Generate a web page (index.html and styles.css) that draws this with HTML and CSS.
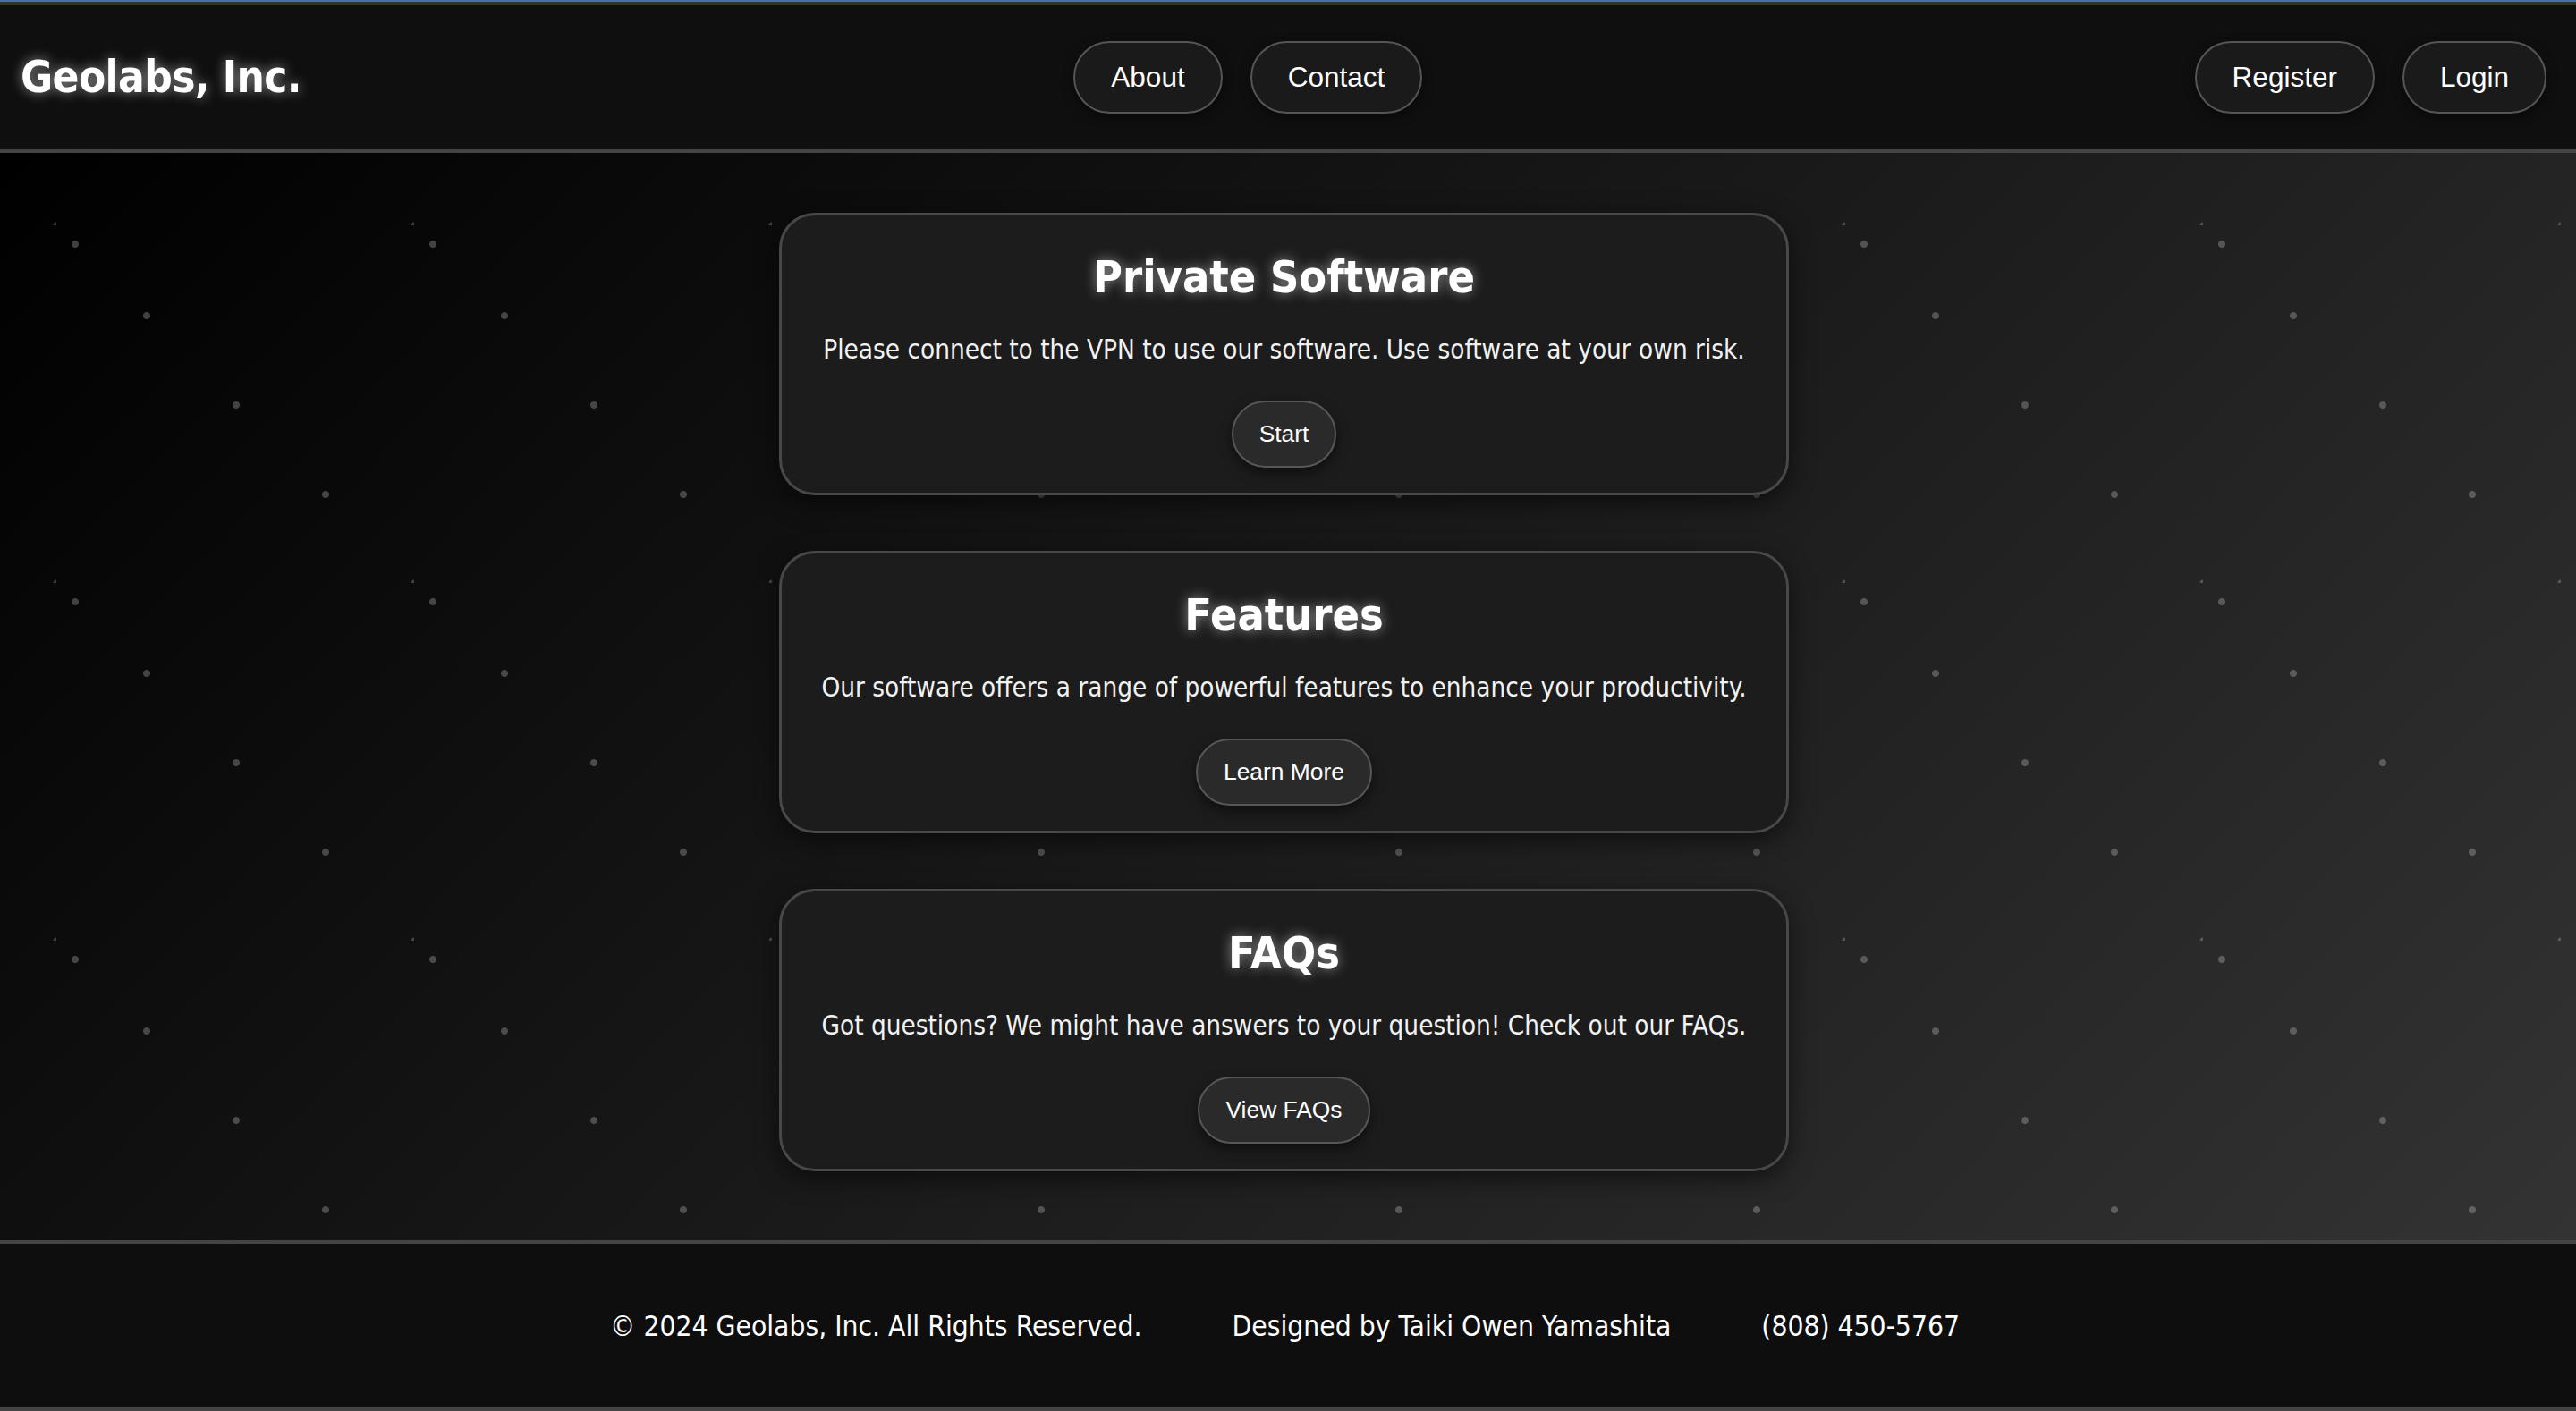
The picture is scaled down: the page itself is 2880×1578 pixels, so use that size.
FILE: index.html
```html
<!DOCTYPE html>
<html lang="en">
<head>
<meta charset="utf-8">
<title>Geolabs, Inc.</title>
<link rel="stylesheet" href="styles.css">
</head>
<body>
<div class="topline"></div>
<header class="site-header">
  <div class="logo">Geolabs, Inc.</div>
  <nav class="nav-group">
    <a class="pill" href="#">About</a>
    <a class="pill" href="#">Contact</a>
  </nav>
  <nav class="nav-group">
    <a class="pill" href="#">Register</a>
    <a class="pill" href="#">Login</a>
  </nav>
</header>
<main class="content">
  <section class="card">
    <h2 class="card-title">Private Software</h2>
    <p class="card-text">Please connect to the VPN to use our software. Use software at your own risk.</p>
    <a class="btn" href="#">Start</a>
  </section>
  <section class="card">
    <h2 class="card-title">Features</h2>
    <p class="card-text">Our software offers a range of powerful features to enhance your productivity.</p>
    <a class="btn" href="#">Learn More</a>
  </section>
  <section class="card">
    <h2 class="card-title">FAQs</h2>
    <p class="card-text">Got questions? We might have answers to your question! Check out our FAQs.</p>
    <a class="btn" href="#">View FAQs</a>
  </section>
</main>
<footer class="site-footer">
  <span>&copy; 2024 Geolabs, Inc. All Rights Reserved.</span>
  <span>Designed by Taiki Owen Yamashita</span>
  <span>(808) 450-5767</span>
</footer>
</body>
</html>
```

FILE: styles.css
```css
* { box-sizing: border-box; }

html, body {
  margin: 0;
  padding: 0;
}

body {
  height: 100vh;
  display: flex;
  flex-direction: column;
  background: #0f0f0f;
  color: #ffffff;
  font-family: "DejaVu Sans Condensed", "DejaVu Sans", sans-serif;
  font-stretch: condensed;
}

.topline {
  flex: none;
  height: 2px;
  background: #4b6ea6;
}

.site-header {
  flex: none;
  height: 169px;
  display: flex;
  align-items: center;
  justify-content: space-between;
  padding: 0 33px 0 23px;
  background: #0f0f0f;
  border-top: 4px solid #333333;
  border-bottom: 4px solid #444444;
}

.logo {
  font-size: 49px;
  letter-spacing: -0.6px;
  font-weight: bold;
  color: #ffffff;
  text-shadow: 0 0 14px rgba(255, 255, 255, 0.55);
}

.nav-group {
  display: flex;
  gap: 31px;
}

.pill {
  display: block;
  padding: 20px 40px;
  font-family: "Liberation Sans", Arial, sans-serif;
  font-stretch: normal;
  font-size: 31.5px;
  line-height: 37px;
  color: #ffffff;
  text-decoration: none;
  background: #1a1a1a;
  border: 2px solid #555555;
  border-radius: 999px;
  box-shadow: 0 4px 12px rgba(0, 0, 0, 0.5);
}

.content {
  flex: 1 1 auto;
  min-height: 0;
  display: flex;
  flex-direction: column;
  align-items: center;
  gap: 62px;
  padding: 67px 9px 0 0;
  background-color: #111;
  background-image:
    radial-gradient(circle at 400px 400px, rgba(255, 255, 255, 0.22) 3px, transparent 4px),
    radial-gradient(circle at 21px 21px, rgba(255, 255, 255, 0.24) 3.5px, transparent 4.5px),
    radial-gradient(circle at 101px 101px, rgba(255, 255, 255, 0.24) 3.5px, transparent 4.5px),
    radial-gradient(circle at 201px 201px, rgba(255, 255, 255, 0.24) 3.5px, transparent 4.5px),
    radial-gradient(circle at 301px 301px, rgba(255, 255, 255, 0.24) 3.5px, transparent 4.5px),
    linear-gradient(135deg, #000000 0%, #333333 100%);
  background-size: 400px 400px, 400px 400px, 400px 400px, 400px 400px, 400px 400px, 100% 100%;
  background-position: 63px 81px, 63px 81px, 63px 81px, 63px 81px, 63px 81px, 0 0;
}

.card {
  flex: none;
  width: 1129px;
  display: flex;
  flex-direction: column;
  align-items: center;
  padding: 40px 20px 28px;
  background: #1c1c1c;
  border: 3px solid #484848;
  border-radius: 40px;
  box-shadow: 0 8px 28px rgba(0, 0, 0, 0.55);
}

.card-title {
  margin: 0;
  font-size: 50px;
  line-height: 58px;
  font-weight: bold;
  text-shadow: 0 0 14px rgba(255, 255, 255, 0.5);
}

.card-text {
  margin: 33px 0 0;
  font-size: 29.4px;
  line-height: 38px;
  color: #f2f2f2;
}

.btn {
  margin-top: 38px;
  padding: 20px 29px;
  font-family: "Liberation Sans", Arial, sans-serif;
  font-stretch: normal;
  font-size: 26.4px;
  line-height: 31px;
  color: #ffffff;
  text-decoration: none;
  background: #2a2a2a;
  border: 2px solid #575757;
  border-radius: 999px;
  box-shadow: 0 6px 14px rgba(0, 0, 0, 0.5);
}

.site-footer {
  flex: none;
  height: 191px;
  display: flex;
  align-items: center;
  justify-content: center;
  gap: 101px;
  padding-right: 7px;
  background: #0e0e0e;
  border-top: 4px solid #444444;
  border-bottom: 4px solid #444444;
  font-size: 31.5px;
}
```
